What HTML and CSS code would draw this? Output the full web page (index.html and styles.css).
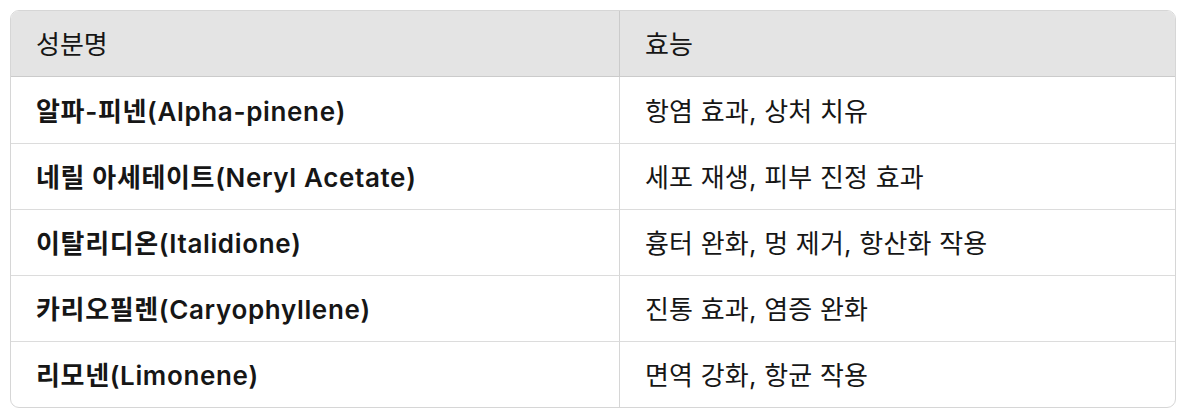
FILE: index.html
```html
<!DOCTYPE html>
<html lang="ko">
<head>
<meta charset="utf-8">
<link rel="stylesheet" href="styles.css">
</head>
<body>
<div class="wrap">
<table class="tbl">
  <thead>
    <tr><th class="c1">성분명</th><th class="c2">효능</th></tr>
  </thead>
  <tbody>
    <tr><td class="c1 name">알파-피넨(Alpha-pinene)</td><td class="c2">항염 효과, 상처 치유</td></tr>
    <tr><td class="c1 name">네릴 아세테이트(Neryl Acetate)</td><td class="c2">세포 재생, 피부 진정 효과</td></tr>
    <tr><td class="c1 name">이탈리디온(Italidione)</td><td class="c2">흉터 완화, 멍 제거, 항산화 작용</td></tr>
    <tr><td class="c1 name">카리오필렌(Caryophyllene)</td><td class="c2">진통 효과, 염증 완화</td></tr>
    <tr><td class="c1 name">리모넨(Limonene)</td><td class="c2">면역 강화, 항균 작용</td></tr>
  </tbody>
</table>
</div>
</body>
</html>
```
FILE: styles.css
```css
html, body { margin: 0; padding: 0; background: #ffffff; }
body {
  font-family: Inter, "Noto Sans CJK KR", "Noto Sans", sans-serif;
  color: #161616;
}
.wrap { padding: 10px 14px 0 10px; }
.tbl {
  width: 1166px;
  table-layout: fixed;
  border-collapse: separate;
  border-spacing: 0;
  border: 1px solid #d6d6d6;
  border-radius: 9px;
  overflow: hidden;
  font-size: 26px;
}
.tbl th, .tbl td {
  height: 66px;
  padding: 0 0 2px 25px;
  text-align: left;
  vertical-align: middle;
  box-sizing: border-box;
  white-space: nowrap;
}
.tbl th {
  background: #e4e4e4;
  font-weight: 400;
  border-bottom: 1px solid #cbcbcb;
}
.tbl tbody tr + tr td { border-top: 1px solid #dcdcdc; }
.c1 { width: 609px; border-right: 1px solid #d6d6d6; }
.tbl th.c1 { border-right-color: #cbcbcb; }
.name { font-weight: 600; letter-spacing: 0.65px; }
.c2 { font-weight: 400; letter-spacing: 0.2px; }
```
